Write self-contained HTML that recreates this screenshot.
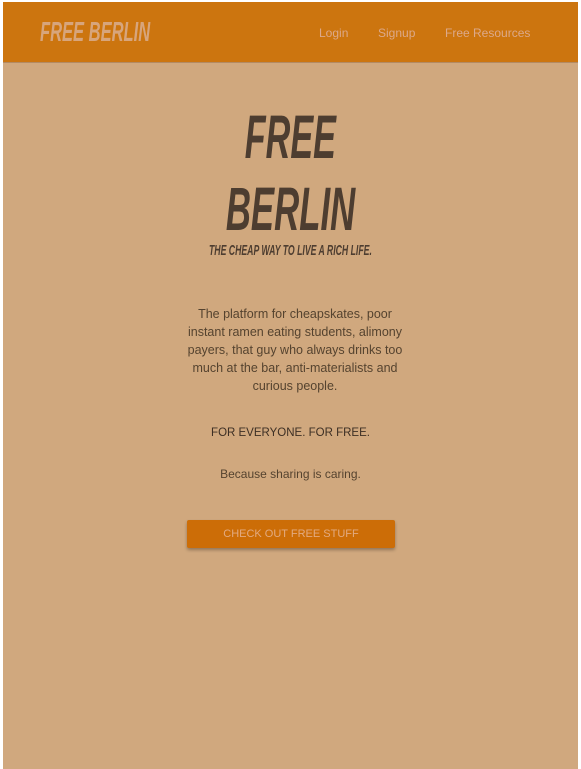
<!DOCTYPE html>
<html><head><meta charset="utf-8"><style>
html,body{margin:0;padding:0;width:581px;height:769px;background:#fff;overflow:hidden}
.page{position:absolute;left:3px;top:2px;width:575px;height:767px;background:#d0a87e}
.hdr{position:absolute;left:0;top:0;width:575px;height:60px;background:#cc750f;border-bottom:1px solid #b38a62}
.bang{font-family:"Liberation Sans Narrow","Liberation Sans",sans-serif;font-weight:bold;font-style:italic;display:inline-block;white-space:nowrap;transform-origin:center center}
.logo{position:absolute;left:37px;top:14px;color:#d7a57c;font-size:28px;line-height:32px}
.logo span{transform:scaleX(.59);transform-origin:left center}
.nav{position:absolute;top:23px;font-family:"Liberation Sans",sans-serif;font-size:12px;color:#dca98a;line-height:16px}
.c{position:absolute;left:0;width:575px;text-align:center}
.t{color:#4d3d30;font-size:61px;line-height:70px}
.txt{font-family:"Liberation Sans",sans-serif;font-size:12.5px;color:#55432f;line-height:18px}
.btn{position:absolute;left:184px;top:518px;width:208px;height:28px;background:#cc6d07;color:#e2aa80;font-family:"Liberation Sans",sans-serif;font-size:11px;line-height:28px;text-align:center;box-shadow:0 2px 3px rgba(0,0,0,.3);border-radius:2px}
</style></head><body><div class="page">
<div class="hdr">
<div class="logo"><span class="bang">FREE BERLIN</span></div>
<div class="nav" style="left:316px">Login</div>
<div class="nav" style="left:375px">Signup</div>
<div class="nav" style="left:442px">Free Resources</div>
</div>
<div class="c t" style="top:100px"><span class="bang" style="transform:scaleX(.56)">FREE</span></div>
<div class="c t" style="top:172px"><span class="bang" style="transform:scaleX(.57)">BERLIN</span></div>
<div class="c" style="top:240px;color:#4d3d30;font-size:15px;line-height:18px"><span class="bang" style="transform:scaleX(.58)">THE CHEAP WAY TO LIVE A RICH LIFE.</span></div>
<div class="txt" style="position:absolute;left:177px;top:303px;width:230px;text-align:center">The platform for cheapskates, poor instant ramen eating students, alimony payers, that guy who always drinks too much at the bar, anti-materialists and curious people.</div>
<div class="c txt" style="top:422px;color:#3d2f24;font-size:11.5px">FOR EVERYONE. FOR FREE.</div>
<div class="c txt" style="top:463px;font-size:12px">Because sharing is caring.</div>
<div class="btn">CHECK OUT FREE STUFF</div>
</div></body></html>
